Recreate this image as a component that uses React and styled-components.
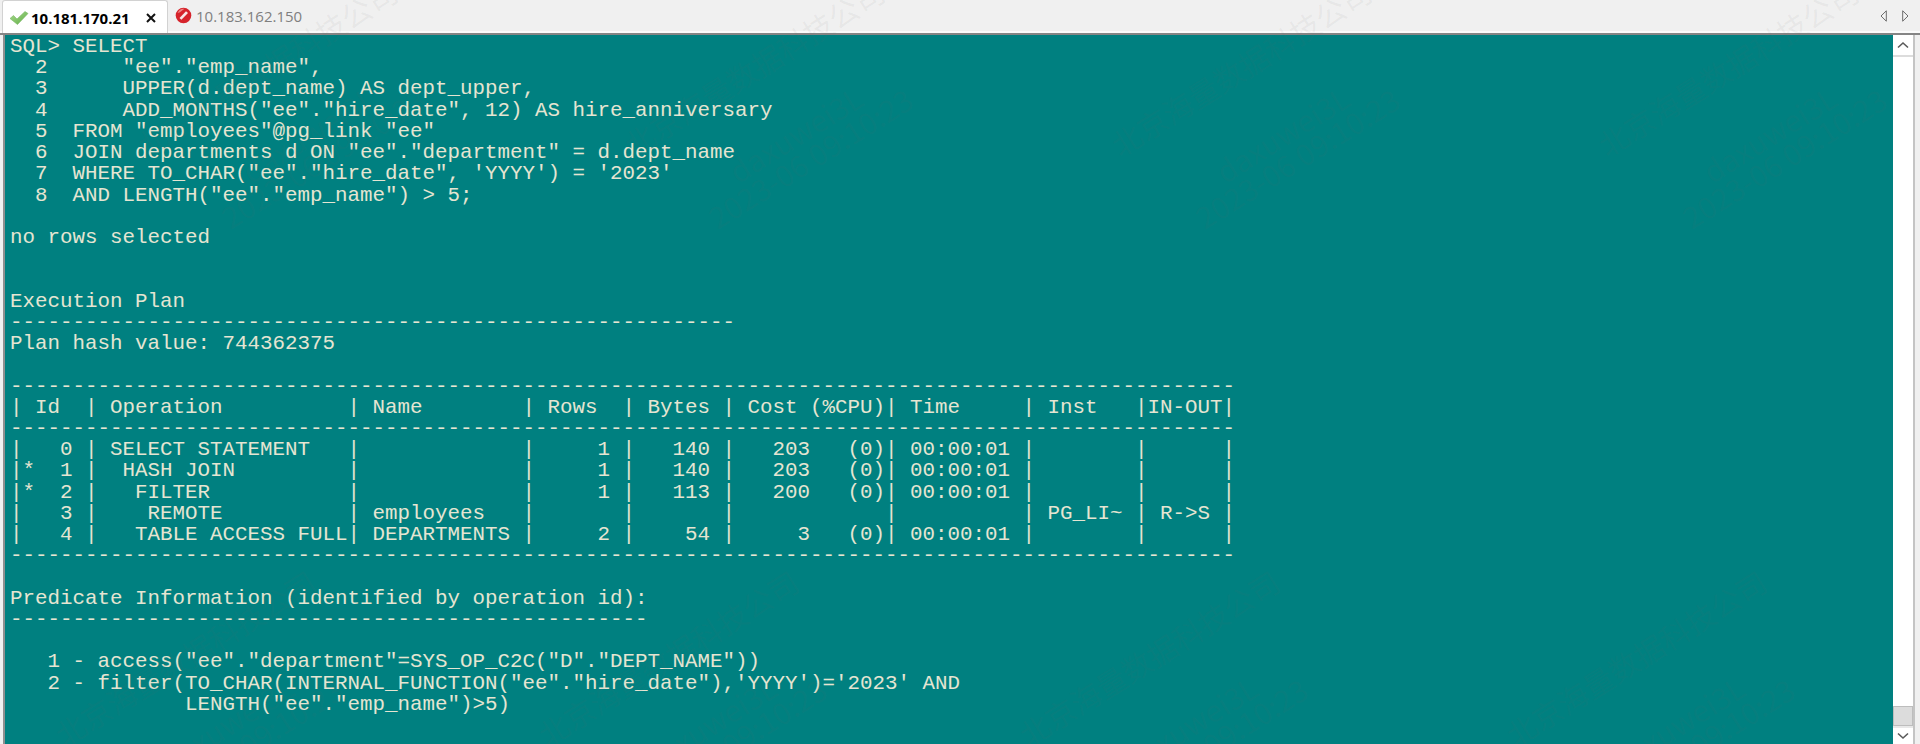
import React from "react";
import styled, { createGlobalStyle } from "styled-components";

const Global = createGlobalStyle`
  html, body { margin: 0; padding: 0; background: #f0f0f0; }
  #root { width: 1920px; height: 744px; overflow: hidden; }
`;

const Window = styled.div`
  position: relative;
  width: 1920px;
  height: 744px;
  display: flex;
  flex-direction: column;
  overflow: hidden;
  background: #f0f0f0;
`;

const TabBar = styled.div`
  height: 33px;
  flex: none;
  box-sizing: border-box;
  display: flex;
  align-items: flex-end;
  padding-left: 2px;
  background: #f0f0f0;
  border-bottom: 2px solid #fbfbfb;
`;

const Tab = styled.div`
  box-sizing: border-box;
  height: ${(p) => (p.$active ? "33px" : "31px")};
  width: ${(p) => (p.$active ? "166px" : "auto")};
  margin-bottom: ${(p) => (p.$active ? "-2px" : "0")};
  display: flex;
  align-items: center;
  padding: ${(p) => (p.$active ? "1px 10px 0 6px" : "0 0 0 7px")};
  gap: ${(p) => (p.$active ? "2px" : "4px")};
  background: ${(p) => (p.$active ? "#ffffff" : "transparent")};
  border: ${(p) => (p.$active ? "1px solid #d2d2d2" : "none")};
  border-bottom: none;
  border-radius: 3px 3px 0 0;
  position: relative;
  z-index: 1;
`;

const TabLabel = styled.span`
  font-family: "Open Sans", "Liberation Sans", sans-serif;
  font-size: 15px;
  font-weight: ${(p) => (p.$active ? 700 : 400)};
  color: ${(p) => (p.$active ? "#000000" : "#7f7f7f")};
  white-space: nowrap;
  flex: ${(p) => (p.$active ? "1" : "none")};
`;

const TabArrows = styled.div`
  margin-left: auto;
  display: flex;
  gap: 15px;
  align-items: center;
  height: 31px;
  padding-right: 11px;
`;

const Rule = styled.div`
  height: 2px;
  flex: none;
  background: #858585;
`;

const Body = styled.div`
  flex: 1;
  min-height: 0;
  display: flex;
  padding: 0 5px 0 3px;
`;

const Terminal = styled.pre`
  flex: 1;
  margin: 0;
  box-sizing: border-box;
  padding: 1px 0 0 5px;
  background: #008080;
  border-left: 2px solid #8f8f8f;
  color: #e5e5d2;
  font-family: "Liberation Mono", "DejaVu Sans Mono", monospace;
  font-size: 20.83px;
  line-height: 21.22px;
  overflow: hidden;
`;

const Line = styled.div`
  height: 21.22px;
  white-space: pre;
`;

const Scrollbar = styled.div`
  width: 22px;
  flex: none;
  display: flex;
  flex-direction: column;
  box-sizing: border-box;
  background: #ffffff;
  border-right: 2px solid #c4c4c4;
`;

const ScrollButton = styled.div`
  height: ${(p) => (p.$down ? "18px" : "22px")};
  flex: none;
  display: flex;
  align-items: center;
  justify-content: center;
  box-sizing: border-box;
  background: #ffffff;
  ${(p) => (p.$down ? "border-top: 2px solid #e8e8e8;" : "border-bottom: 2px solid #dcdcdc;")}
`;

const ScrollTrack = styled.div`
  flex: 1;
  display: flex;
  flex-direction: column;
  justify-content: flex-end;
`;

const ScrollThumb = styled.div`
  height: 20px;
  box-sizing: border-box;
  background: #dcdcdc;
  border: 1px solid #bdbdbd;
`;

const WatermarkLayer = styled.div`
  position: absolute;
  inset: 0;
  pointer-events: none;
  overflow: hidden;
  z-index: 5;
`;

const Watermark = styled.div`
  position: absolute;
  width: 300px;
  transform-origin: 0 0;
  transform: rotate(-32deg);
  color: rgba(110, 110, 110, 0.07);
  font-family: "Noto Sans CJK SC", "Liberation Sans", sans-serif;
  white-space: nowrap;
  display: flex;
  flex-direction: column;
  align-items: center;
  font-size: 30px;
  line-height: 28px;
`;

const WatermarkTitle = styled.span`
  margin-bottom: 50px;
`;

const CheckIcon = () => (
  <svg width="20" height="16" viewBox="0 0 20 16">
    <defs>
      <linearGradient id="chk" x1="0" y1="0" x2="1" y2="1">
        <stop offset="0" stopColor="#a9d98e" />
        <stop offset="1" stopColor="#5fae45" />
      </linearGradient>
    </defs>
    <path d="M1 8.5 L4.5 5.5 L8 9 L16 1.5 L19 3.5 L8.5 14.5 Z" fill="url(#chk)" stroke="#79b864" strokeWidth="0.6" />
  </svg>
);

const BlockedIcon = () => (
  <svg width="17" height="17" viewBox="0 0 17 17">
    <circle cx="8.5" cy="8.5" r="7.8" fill="#d6232b" />
    <path d="M4.5 11 L11 4.3 L13 6 L6.4 12.8 Z" fill="#f8e6e6" />
    <path d="M2.6 6 A6.6 6.6 0 0 1 9.5 1.8 L5 5.2 Z" fill="#ee8585" />
  </svg>
);

const CloseIcon = () => (
  <svg width="12" height="12" viewBox="0 0 12 12">
    <path d="M2 2 L10 10 M10 2 L2 10" stroke="#111" strokeWidth="2" />
  </svg>
);

const ArrowIcon = ({ right }) => (
  <svg width="7" height="12" viewBox="0 0 7 12">
    <path
      d={right ? "M0.7 0.8 L6 6 L0.7 11.2 Z" : "M6.3 0.8 L1 6 L6.3 11.2 Z"}
      fill="#f4f4f4"
      stroke="#6a6a6a"
      strokeWidth="1"
    />
  </svg>
);

const Chevron = ({ down }) => (
  <svg width="12" height="8" viewBox="0 0 12 8">
    <path d={down ? "M1 1.5 L6 6 L11 1.5" : "M1 6.5 L6 2 L11 6.5"} fill="none" stroke="#5a5a5a" strokeWidth="1.6" />
  </svg>
);

const rule98 = "-".repeat(98);

const lines = [
  "SQL> SELECT",
  '  2      "ee"."emp_name",',
  "  3      UPPER(d.dept_name) AS dept_upper,",
  '  4      ADD_MONTHS("ee"."hire_date", 12) AS hire_anniversary',
  '  5  FROM "employees"@pg_link "ee"',
  '  6  JOIN departments d ON "ee"."department" = d.dept_name',
  "  7  WHERE TO_CHAR(\"ee\".\"hire_date\", 'YYYY') = '2023'",
  '  8  AND LENGTH("ee"."emp_name") > 5;',
  "",
  "no rows selected",
  "",
  "",
  "Execution Plan",
  "-".repeat(58),
  "Plan hash value: 744362375",
  "",
  rule98,
  "| Id  | Operation          | Name        | Rows  | Bytes | Cost (%CPU)| Time     | Inst   |IN-OUT|",
  rule98,
  "|   0 | SELECT STATEMENT   |             |     1 |   140 |   203   (0)| 00:00:01 |        |      |",
  "|*  1 |  HASH JOIN         |             |     1 |   140 |   203   (0)| 00:00:01 |        |      |",
  "|*  2 |   FILTER           |             |     1 |   113 |   200   (0)| 00:00:01 |        |      |",
  "|   3 |    REMOTE          | employees   |       |       |            |          | PG_LI~ | R->S |",
  "|   4 |   TABLE ACCESS FULL| DEPARTMENTS |     2 |    54 |     3   (0)| 00:00:01 |        |      |",
  rule98,
  "",
  "Predicate Information (identified by operation id):",
  "-".repeat(51),
  "",
  '   1 - access("ee"."department"=SYS_OP_C2C("D"."DEPT_NAME"))',
  "   2 - filter(TO_CHAR(INTERNAL_FUNCTION(\"ee\".\"hire_date\"),'YYYY')='2023' AND",
  '              LENGTH("ee"."emp_name")>5)',
];

const marks = [
  [132, 135], [619, 135], [1106, 135], [1593, 135],
  [50, 725], [533, 725], [1014, 725], [1501, 725],
];

export default function App() {
  return (
    <Window>
      <Global />
      <TabBar>
        <Tab $active>
          <CheckIcon />
          <TabLabel $active>10.181.170.21</TabLabel>
          <CloseIcon />
        </Tab>
        <Tab>
          <BlockedIcon />
          <TabLabel>10.183.162.150</TabLabel>
        </Tab>
        <TabArrows>
          <ArrowIcon />
          <ArrowIcon right />
        </TabArrows>
      </TabBar>
      <Rule />
      <Body>
        <Terminal>
          {lines.map((text, i) => (
            <Line key={i}>{text}</Line>
          ))}
        </Terminal>
        <Scrollbar>
          <ScrollButton>
            <Chevron />
          </ScrollButton>
          <ScrollTrack>
            <ScrollThumb />
          </ScrollTrack>
          <ScrollButton $down>
            <Chevron down />
          </ScrollButton>
        </Scrollbar>
      </Body>
      <WatermarkLayer>
        {marks.map(([x, y]) => (
          <Watermark key={x} style={{ left: x, top: y }}>
            <WatermarkTitle>北京海量数据科技公司</WatermarkTitle>
            <span>daxuwei3L</span>
            <span>2023-06 09:10:23</span>
          </Watermark>
        ))}
      </WatermarkLayer>
    </Window>
  );
}
